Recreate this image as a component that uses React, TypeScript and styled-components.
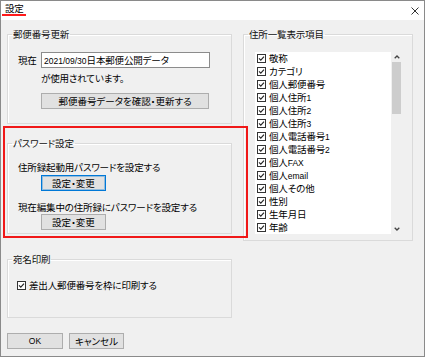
import * as React from 'react'
import styled, { createGlobalStyle } from 'styled-components'

const GlobalStyle = createGlobalStyle`
  html, body {
    margin: 0;
    padding: 0;
    background: #f0f0f0;
  }
  body {
    font-family: "Noto Sans CJK JP", "Noto Sans", sans-serif;
    font-feature-settings: "palt";
    font-size: 9.5px;
    letter-spacing: -0.15px;
    color: #000;
  }
`

const Window = styled.div`
  position: relative;
  width: 425px;
  height: 357px;
  box-sizing: border-box;
  border: 1px solid #8a8a8a;
  background: #f0f0f0;
  display: flex;
  flex-direction: column;
`

const TitleBar = styled.div`
  height: 17px;
  background: #fff;
  display: flex;
  align-items: flex-start;
  justify-content: space-between;
  padding: 2px 5px 0 1px;
`

const Title = styled.span`
  line-height: 11px;
  padding: 0 2px 0 3px;
  border-bottom: 2px solid #ff1a1a;
`

const CloseIcon = styled.svg`
  margin-top: 4px;
`

const Body = styled.div`
  display: flex;
  gap: 11px;
  padding: 8px 0 0 6px;
`

const Column = styled.div`
  display: flex;
  flex-direction: column;
  width: ${p => p.$width}px;
`

const Group = styled.fieldset`
  margin: ${p => p.$top || 0}px 0 0 0;
  padding: 0;
  min-width: 0;
  border: 1px solid #dadada;
  box-shadow: inset 1px 1px 0 #fff;
`

const Legend = styled.legend`
  margin-left: 4px;
  padding: 0 1px;
  line-height: 12px;
  color: #111;
`

const GroupContent = styled.div`
  display: flex;
  flex-direction: column;
  align-items: flex-start;
  padding: ${p => p.$pad};
`

const Row = styled.div`
  display: flex;
  align-items: center;
  height: 16px;
`

const Label = styled.span`
  width: 23px;
  line-height: 13px;
`

const Field = styled.div`
  width: 169px;
  height: 16px;
  box-sizing: border-box;
  border: 1px solid #8c8c8c;
  background: #fff;
  padding-left: 2px;
  line-height: 14px;
  white-space: nowrap;
`

const Text = styled.div`
  line-height: 13px;
  margin-top: ${p => p.$top || 0}px;
  margin-left: ${p => p.$left || 0}px;
  white-space: nowrap;
`

const Button = styled.button`
  font: inherit;
  color: #000;
  height: 16px;
  width: ${p => p.$width}px;
  margin-top: ${p => p.$top || 0}px;
  margin-left: ${p => p.$left || 0}px;
  padding: 0;
  box-sizing: border-box;
  background: #e1e1e1;
  border: 1px solid ${p => (p.$focused ? '#0078d7' : '#adadad')};
  box-shadow: ${p => (p.$focused ? 'inset 0 0 0 1px rgba(0,120,215,0.35)' : 'none')};
  line-height: 13px;
  white-space: nowrap;
`

const Latin = styled.span`
  font-family: "Liberation Sans", Arial, sans-serif;
  font-size: 8.5px;
  letter-spacing: 0;
`

const CheckRow = styled.div`
  display: flex;
  align-items: center;
  gap: 3px;
  height: 13px;
  line-height: 13px;
  padding-left: ${p => p.$left || 0}px;
  white-space: nowrap;
`

const ListBox = styled.div`
  display: flex;
  width: 147px;
  height: 182px;
`

const ListItems = styled.div`
  flex: 1;
  background: #fff;
  overflow: hidden;
`

const ScrollBar = styled.div`
  width: 11px;
  display: flex;
  flex-direction: column;
  align-items: center;
  background: #f0f0f0;
`

const ArrowBox = styled.div`
  height: 10px;
  width: 100%;
  display: flex;
  align-items: center;
  justify-content: center;
`

const Thumb = styled.div`
  width: 9px;
  height: 52px;
  background: #cdcdcd;
`

const Track = styled.div`
  flex: 1;
`

const Footer = styled.div`
  display: flex;
  gap: 6px;
  margin-top: 15px;
`

const Highlight = styled.div`
  position: absolute;
  left: 2px;
  top: 125px;
  width: 245px;
  height: 112px;
  box-sizing: border-box;
  border: 2px solid #f01818;
  pointer-events: none;
`

const CheckBox = () => (
  <svg width="9" height="9" viewBox="0 0 9 9">
    <rect x="0.5" y="0.5" width="8" height="8" fill="#fff" stroke="#333" />
    <polyline points="2,4.3 3.8,6.2 7,2.6" fill="none" stroke="#222" strokeWidth="1.1" />
  </svg>
)

const withLatin = (s: string) =>
  s.split(/([A-Za-z0-9/]+)/).map((part, i) =>
    /^[A-Za-z0-9/]+$/.test(part) ? <Latin key={i}>{part}</Latin> : part
  )

const columns = [
  '敬称', 'カテゴリ', '個人郵便番号', '個人住所1', '個人住所2', '個人住所3',
  '個人電話番号1', '個人電話番号2', '個人FAX', '個人email', '個人その他',
  '性別', '生年月日', '年齢',
]

export default () => {
  return (
    <>
      <GlobalStyle />
      <Window>
        <TitleBar>
          <Title>設定</Title>
          <CloseIcon width="8" height="8" viewBox="0 0 8 8">
            <path d="M0.5 0.5 L7.5 7.5 M7.5 0.5 L0.5 7.5" stroke="#333" strokeWidth="1" />
          </CloseIcon>
        </TitleBar>
        <Body>
          <Column $width={225}>
            <Group>
              <Legend>郵便番号更新</Legend>
              <GroupContent $pad="12px 0 14px 10px">
                <Row>
                  <Label>現在</Label>
                  <Field>{withLatin('2021/09/30日本郵便公開データ')}</Field>
                </Row>
                <Text $top={4} $left={23}>が使用されています。</Text>
                <Button $width={168} $top={8} $left={23}>郵便番号データを確認・更新する</Button>
              </GroupContent>
            </Group>
            <Group $top={13}>
              <Legend>パスワード設定</Legend>
              <GroupContent $pad="12px 0 3px 10px">
                <Text>住所録起動用パスワードを設定する</Text>
                <Button $width={65} $top={1} $left={23} $focused>設定・変更</Button>
                <Text $top={10}>現在編集中の住所録にパスワードを設定する</Text>
                <Button $width={65} $left={23}>設定・変更</Button>
              </GroupContent>
            </Group>
            <Group $top={19}>
              <Legend>宛名印刷</Legend>
              <GroupContent $pad="14px 0 25px 9px">
                <CheckRow>
                  <CheckBox />
                  差出人郵便番号を枠に印刷する
                </CheckRow>
              </GroupContent>
            </Group>
            <Footer>
              <Button $width={56}><Latin>OK</Latin></Button>
              <Button $width={55}>キャンセル</Button>
            </Footer>
          </Column>
          <Column $width={170}>
            <Group>
              <Legend>住所一覧表示項目</Legend>
              <GroupContent $pad="12px 10px 6px 11px">
                <ListBox>
                  <ListItems>
                    {columns.map(c => (
                      <CheckRow key={c} $left={2}>
                        <CheckBox />
                        <span>{withLatin(c)}</span>
                      </CheckRow>
                    ))}
                  </ListItems>
                  <ScrollBar>
                    <ArrowBox>
                      <svg width="6" height="4" viewBox="0 0 6 4">
                        <polyline points="0.7,3.3 3,1 5.3,3.3" fill="none" stroke="#444" strokeWidth="1.3" />
                      </svg>
                    </ArrowBox>
                    <Thumb />
                    <Track />
                    <ArrowBox>
                      <svg width="6" height="4" viewBox="0 0 6 4">
                        <polyline points="0.7,0.7 3,3 5.3,0.7" fill="none" stroke="#444" strokeWidth="1.3" />
                      </svg>
                    </ArrowBox>
                  </ScrollBar>
                </ListBox>
              </GroupContent>
            </Group>
          </Column>
        </Body>
        <Highlight />
      </Window>
    </>
  )
}
